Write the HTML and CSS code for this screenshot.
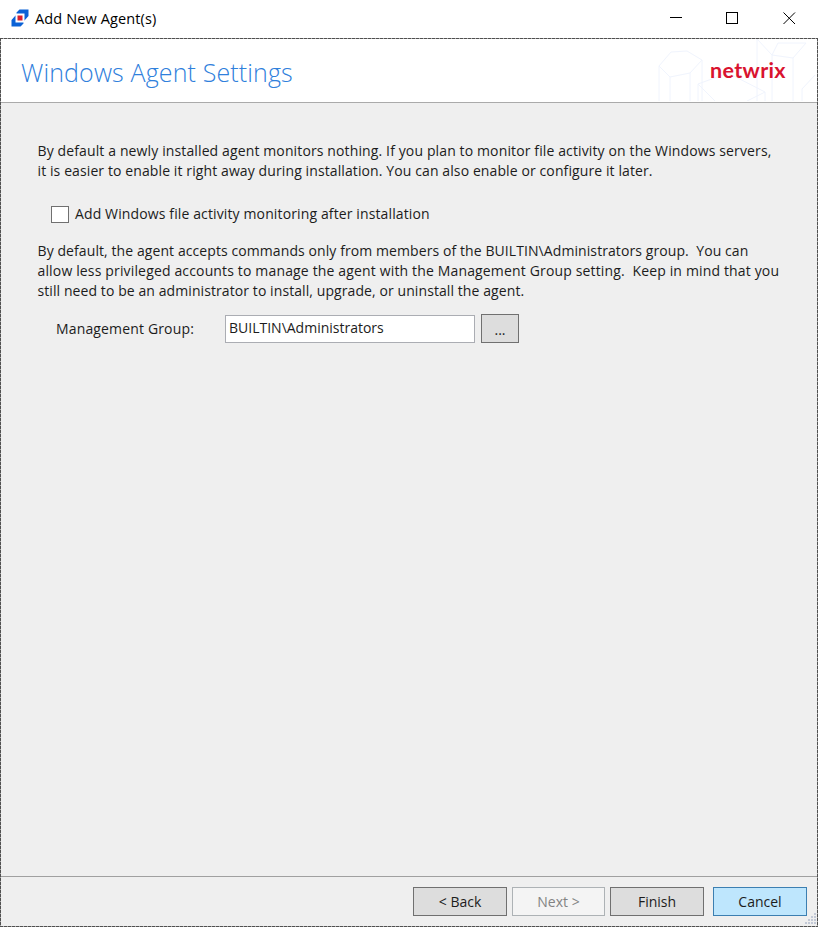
FILE: index.html
```html
<!DOCTYPE html>
<html lang="en">
<head>
<meta charset="utf-8">
<title>Add New Agent(s)</title>
<link rel="stylesheet" href="styles.css">
</head>
<body>
<div class="window">
  <div class="titlebar">
    <svg class="app-icon" width="18" height="18" viewBox="0 0 18 18">
      <path d="M5.500 5V3.500L8.500 .5H17.500V7L13.500 11.500H12V5Z" fill="#0b62d6"/>
      <path d="M12.500 13V14.500L9.500 17.500H.5V11L4.500 6.500H6V13Z" fill="#0b62d6"/>
      <rect x="4.500" y="4.500" width="9" height="9" fill="#fff"/>
      <rect x="6.500" y="6.500" width="5" height="5" fill="#d9202f"/>
    </svg>
    <span class="window-title">Add New Agent(s)</span>
    <svg class="controls" width="128" height="14" viewBox="0 0 128 14" fill="none" stroke="#000" shape-rendering="crispEdges">
      <path d="M0 6.500H12"/>
      <rect x="56.500" y="1.500" width="11" height="11"/>
      <path d="M113.500 1.500L125 13M125 1.500L113.500 13" shape-rendering="auto"/>
    </svg>
  </div>
  <div class="dialog">
    <header class="header">
      <h1>Windows Agent Settings</h1>
      <div class="brand">
        <svg width="160" height="62" viewBox="0 0 160 62" fill="none" stroke="#f0f4fd">
          <path d="M2 27L14 13L30 12L45 21V62M2 27L13 38L33 34L45 21M2 27V62M13 38V62M33 34V62"/>
          <path d="M41 45L71 34L108 53V62M41 45V62M41 45L58 62M108 53L90 62"/>
          <path d="M100 62V0L115 16V62M115 16L121 4H149L136 19L115 16M136 19V62M158 36L145 50V62"/>
        </svg>
        <span class="logo">netwrix</span>
      </div>
    </header>
    <main class="content">
      <p class="copy"><span class="wide">By default a newly installed agent monitors nothing. If you plan to monitor file activity on the Windows servers,</span><br><span class="mid">it is easier to enable it right away during installation. You can also enable or configure it later.</span></p>
      <div class="check"><span class="box"></span><span class="wide">Add Windows file activity monitoring after installation</span></div>
      <p class="copy"><span class="snug">By default, the agent accepts commands only from members of the BUILTIN\Administrators group.&nbsp; You can</span><br><span class="wider">allow less privileged accounts to manage the agent with the Management Group setting.&nbsp; Keep in mind that you</span><br><span class="snug">still need to be an administrator to install, upgrade, or uninstall the agent.</span></p>
      <div class="field">
        <span class="label wider">Management Group:</span>
        <div class="input">BUILTIN\Administrators</div>
        <div class="button browse">...</div>
      </div>
    </main>
    <footer class="footer">
      <div class="button">&lt; Back</div>
      <div class="button disabled">Next &gt;</div>
      <div class="button finish">Finish</div>
      <div class="button primary">Cancel</div>
      <svg class="grip" width="13" height="13" viewBox="0 0 13 13" fill="#c3c9d6">
        <path d="M10 0h2v2h-2zM7 3h2v2h-2zM10 3h2v2h-2zM4 6h2v2h-2zM7 6h2v2h-2zM10 6h2v2h-2zM1 9h2v2h-2zM4 9h2v2h-2zM7 9h2v2h-2zM10 9h2v2h-2z"/>
      </svg>
    </footer>
  </div>
</div>
</body>
</html>
```
FILE: styles.css
```css
* { box-sizing: border-box; }
body { margin: 0; font: 14px/20px "Open Sans", sans-serif; color: #1c1c1c; background: #fff; }
.window { width: 818px; height: 927px; display: flex; flex-direction: column; }
.titlebar { height: 38px; display: flex; align-items: center; padding: 0 20px 2px 11px; color: #000; }
.window-title { margin: 1px 0 0 6px; flex: 1; font-size: 14.5px; letter-spacing: 0.12px; }
.controls { margin-top: -1px; }
.dialog {
  flex: 1; display: flex; flex-direction: column; padding: 1px;
  background:
    repeating-linear-gradient(90deg, #505050 0 3px, #a8a8a8 3px 4px) top / 100% 1px no-repeat,
    repeating-linear-gradient(90deg, #505050 0 3px, #a8a8a8 3px 4px) bottom / 100% 1px no-repeat,
    repeating-linear-gradient(#505050 0 3px, #a8a8a8 3px 4px) left / 1px 100% no-repeat,
    repeating-linear-gradient(#505050 0 3px, #a8a8a8 3px 4px) right / 1px 100% no-repeat,
    #efefef;
}
.header { height: 64px; background: #fff; border-bottom: 1px solid #aaa; display: flex; justify-content: space-between; padding-left: 20px; }
h1 { margin: 0; font: 300 25px/66px "Open Sans", sans-serif; letter-spacing: 0.13px; color: #2f80dc; white-space: nowrap; }
.brand { position: relative; width: 160px; overflow: hidden; }
.logo { position: absolute; left: 53px; top: 16px; font: 700 21.5px/30px "Lato", sans-serif; letter-spacing: 0.35px; color: #d9132f; }
.content { flex: 1; padding: 38px 36px 0 36.5px; white-space: nowrap; }
.copy { margin: 0; }
.snug { letter-spacing: 0.085px; }
.mid { letter-spacing: 0.105px; }
.wide { letter-spacing: 0.125px; }
.wider { letter-spacing: 0.153px; }
.check { display: flex; align-items: center; height: 20px; margin: 23px 0 17px 13.5px; }
.box { width: 18px; height: 17px; border: 1px solid #707070; background: #fff; margin-right: 6px; }
.field { display: flex; align-items: center; margin: 13px 0 0 18.5px; height: 29px; }
.label { width: 169px; }
.input { width: 250px; height: 28px; border: 1px solid #abadb3; background: #fff; line-height: 23px; padding-left: 3px; }
.button { width: 94px; height: 29px; border: 1px solid #707070; background: #ddd; text-align: center; line-height: 28px; }
.browse { width: 38px; margin-left: 6px; line-height: 29px; }
.footer { position: relative; height: 50px; border-top: 1px solid #a0a0a0; display: flex; justify-content: flex-end; padding: 10px 10px 0; gap: 5px; }
.disabled { width: 93px; background: #f4f4f4; border-color: #adb2b5; color: #838383; }
.finish { margin-right: 4px; }
.primary { background: #bee6fd; border-color: #3c7fb1; }
.grip { position: absolute; right: 0; bottom: 0; }
```
